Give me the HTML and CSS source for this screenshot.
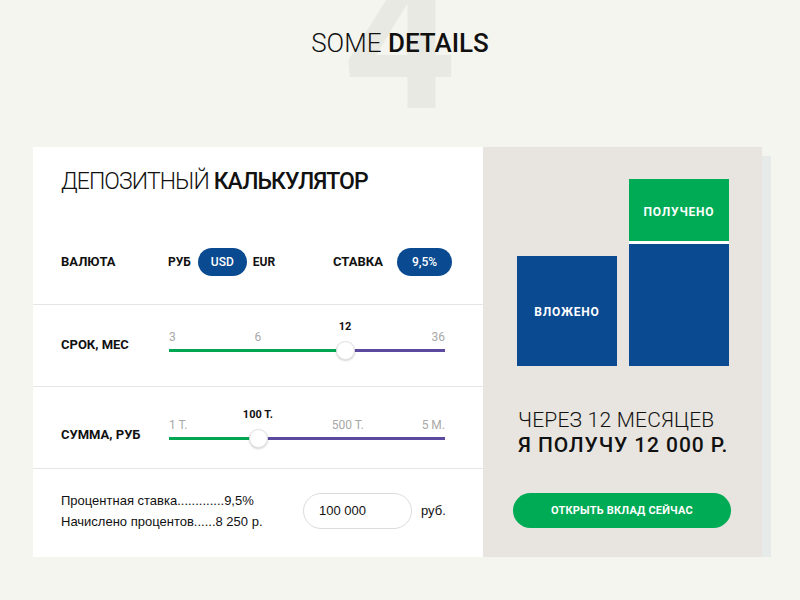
FILE: index.html
```html
<!DOCTYPE html>
<html lang="ru">
<head>
<meta charset="utf-8">
<title>Some details</title>
<link rel="stylesheet" href="styles.css">
</head>
<body>
<header class="page-head">
  <span class="big-num" aria-hidden="true">4</span>
  <h1 class="page-title"><span class="light">SOME</span> <b>DETAILS</b></h1>
</header>

<main class="card">
  <section class="calc">
    <h2 class="calc-title"><span class="light">ДЕПОЗИТНЫЙ</span> <b>КАЛЬКУЛЯТОР</b></h2>

    <div class="row row-opts">
      <div class="label">ВАЛЮТА</div>
      <div class="currency">
        <span class="opt">РУБ</span>
        <span class="pill pill-usd">USD</span>
        <span class="opt">EUR</span>
      </div>
      <div class="label label-rate">СТАВКА</div>
      <span class="pill pill-rate">9,5%</span>
    </div>

    <div class="row row-slider row-term">
      <div class="label">СРОК, МЕС</div>
      <div class="slider">
        <span class="tick tick-start">3</span>
        <span class="tick tick-mid" style="left:32.2%">6</span>
        <span class="tick tick-cur" style="left:63.8%">12</span>
        <span class="tick tick-end">36</span>
        <div class="track">
          <div class="fill" style="width:63.8%"></div>
        </div>
        <span class="thumb" style="left:63.8%"></span>
      </div>
    </div>

    <div class="row row-slider row-sum">
      <div class="label">СУММА, РУБ</div>
      <div class="slider">
        <span class="tick tick-start">1 Т.</span>
        <span class="tick tick-cur" style="left:32.2%">100 Т.</span>
        <span class="tick tick-mid" style="left:64.8%">500 Т.</span>
        <span class="tick tick-end">5 М.</span>
        <div class="track">
          <div class="fill" style="width:32.2%"></div>
        </div>
        <span class="thumb" style="left:32.2%"></span>
      </div>
    </div>

    <div class="row row-summary">
      <div class="summary">
        <div>Процентная ставка.............9,5%</div>
        <div>Начислено процентов......8 250 р.</div>
      </div>
      <div class="amount">100 000</div>
      <span class="unit">руб.</span>
    </div>
  </section>

  <aside class="result">
    <div class="chart">
      <div class="bar bar-in">ВЛОЖЕНО</div>
      <div class="bar-stack">
        <div class="bar bar-gain">ПОЛУЧЕНО</div>
        <div class="bar bar-base"></div>
      </div>
    </div>
    <p class="result-text"><span class="light line-1">ЧЕРЕЗ 12 МЕСЯЦЕВ</span><br><b class="line-2">Я ПОЛУЧУ 12 000 Р.</b></p>
    <button class="cta">ОТКРЫТЬ ВКЛАД СЕЙЧАС</button>
  </aside>
</main>
</body>
</html>
```

FILE: styles.css
```css
* { box-sizing: border-box; }

html, body {
  margin: 0;
  padding: 0;
  background: #f5f5f0;
  font-family: Roboto, "Noto Sans", sans-serif;
  color: #111;
}

.light { font-weight: 300; }
b { font-weight: 500; }

.page-head {
  position: relative;
  height: 147px;
  overflow: hidden;
}

.big-num {
  position: absolute;
  left: 343px;
  top: -59px;
  font-size: 198px;
  font-weight: 700;
  line-height: 1;
  color: #e9e9e3;
}

.page-title {
  position: relative;
  margin: 0;
  padding-top: 28px;
  text-align: center;
  font-size: 26px;
  line-height: 30px;
  font-weight: 400;
  color: #111;
}

.card {
  display: flex;
  margin-left: 33px;
  width: 729px;
  height: 410px;
  background: #fff;
  box-shadow: 9px 9px 0 #e6eae8;
}

.calc {
  width: 450px;
  background: #fff;
}

.calc-title {
  margin: 0;
  height: 79px;
  padding: 21px 0 0 28px;
  font-size: 23px;
  line-height: 28px;
  font-weight: 400;
  letter-spacing: -0.9px;
}

.row {
  display: flex;
  padding: 0 28px;
}

.label {
  font-size: 13px;
  font-weight: 700;
  line-height: 16px;
  width: 107px;
  flex: none;
}

.row-opts {
  height: 79px;
  align-items: center;
  padding-top: 2px;
  padding-bottom: 8px;
  border-bottom: 1px solid #e6e6e6;
}

.currency {
  display: flex;
  align-items: center;
  width: 165px;
}

.opt { font-size: 12px; font-weight: 700; }

.label-rate { width: 64px; }

.pill {
  display: inline-flex;
  align-items: center;
  justify-content: center;
  height: 28px;
  border-radius: 14px;
  background: #0a4a91;
  color: #fff;
  font-size: 12px;
  font-weight: 500;
}

.pill-usd { width: 49px; margin: 0 6px 0 7px; }
.pill-rate { width: 55px; }

.row-slider {
  height: 82px;
  align-items: flex-start;
  border-bottom: 1px solid #e6e6e6;
}

.row-term .label { margin-top: 32px; }
.row-term .slider { margin-top: 14px; }
.row-sum .label { margin-top: 40px; }
.row-sum .slider { margin-top: 20px; }

.slider {
  position: relative;
  width: 276px;
  height: 40px;
  margin-left: 1px;
}

.track {
  position: absolute;
  left: 0;
  right: 0;
  top: 30px;
  height: 3px;
  background: #5b4a9f;
}

.fill {
  height: 100%;
  background: #00a651;
}

.thumb {
  position: absolute;
  top: 22px;
  width: 19px;
  height: 19px;
  margin-left: -9px;
  border-radius: 50%;
  background: #fff;
  border: 1px solid #e2e2e2;
  box-shadow: 0 1px 2px rgba(0,0,0,0.18);
}

.tick {
  position: absolute;
  top: 11px;
  font-size: 12px;
  line-height: 14px;
  color: #a8a8a8;
  white-space: nowrap;
}

.tick-start { left: 0; }
.tick-end { right: 0; }
.tick-mid { transform: translateX(-50%); }
.tick-cur {
  top: 1px;
  font-size: 11px;
  transform: translateX(-50%);
  color: #111;
  font-weight: 700;
}

.row-summary {
  height: 88px;
  align-items: center;
  padding-bottom: 5px;
}

.summary {
  width: 242px;
  font-family: "Liberation Sans", Arial, sans-serif;
  font-size: 13px;
  line-height: 21px;
  color: #111;
}

.amount {
  width: 109px;
  height: 36px;
  border: 1px solid #dcdcdc;
  border-radius: 18px;
  padding-left: 15px;
  display: flex;
  align-items: center;
  font-family: "Liberation Sans", Arial, sans-serif;
  font-size: 13px;
}

.unit {
  margin-left: 9px;
  font-family: "Liberation Sans", Arial, sans-serif;
  font-size: 13px;
}

.result {
  width: 279px;
  background: #e8e5e0;
  padding: 32px 0 0 34px;
}

.chart {
  display: flex;
  align-items: flex-end;
  gap: 12px;
  height: 187px;
}

.bar {
  display: flex;
  align-items: center;
  justify-content: center;
  width: 100px;
  color: #fff;
  font-size: 12px;
  font-weight: 700;
  letter-spacing: 0.8px;
}

.bar-in {
  height: 110px;
  padding-top: 2px;
  background: #0a4a91;
}

.bar-stack {
  display: flex;
  flex-direction: column;
}

.bar-gain {
  height: 62px;
  padding-top: 3px;
  background: #00ab55;
}

.bar-base {
  height: 125px;
  background: #0a4a91;
  border-top: 3px solid #fff;
}

.result-text {
  margin: 42px 0 0 1px;
  font-size: 21px;
  line-height: 25px;
  font-weight: 400;
}

.line-1 { letter-spacing: 0.2px; }
.line-2 { letter-spacing: 0.9px; }

.cta {
  display: block;
  margin: 35px 0 0 -4px;
  width: 218px;
  height: 35px;
  border: 0;
  border-radius: 17.5px;
  background: #00ab55;
  color: #fff;
  font-family: Roboto, "Noto Sans", sans-serif;
  font-size: 11px;
  font-weight: 700;
  letter-spacing: 0.2px;
}
```
